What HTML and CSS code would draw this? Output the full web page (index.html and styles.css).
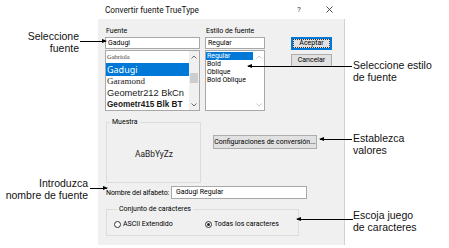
FILE: index.html
```html
<!DOCTYPE html>
<html lang="es">
<head>
<meta charset="utf-8">
<title>Convertir fuente TrueType</title>
<link rel="stylesheet" href="styles.css">
</head>
<body>
<div class="screen">
  <div class="notes notes-left">
    <p class="note note-font">Seleccione<br>fuente</p>
    <p class="note note-name">Introduzca<br>nombre de fuente</p>
  </div>

  <div class="dialog">
    <div class="titlebar">
      <span class="title">Convertir fuente TrueType</span>
      <span class="tb-help">?</span>
      <svg class="tb-close" width="7" height="7" viewBox="0 0 7 7"><path d="M0.5 0.5L6.5 6.5M6.5 0.5L0.5 6.5" stroke="#222" stroke-width="0.8" fill="none"/></svg>
    </div>
    <div class="body">
      <div class="top-row">
        <div class="col col-font">
          <div class="lbl">Fuente</div>
          <div class="textbox">Gadugi</div>
          <div class="listbox">
            <ul class="items font-items">
              <li class="fi fi-gabriola">Gabriola</li>
              <li class="fi fi-gadugi selected">Gadugi</li>
              <li class="fi fi-garamond">Garamond</li>
              <li class="fi fi-geo212">Geometr212 BkCn</li>
              <li class="fi fi-geo415">Geometr415 Blk BT</li>
            </ul>
            <div class="scrollbar">
              <div class="sb-arrow"><svg width="6" height="4" viewBox="0 0 6 4"><path d="M0.5 3.5L3 1L5.5 3.5" stroke="#606060" stroke-width="0.9" fill="none"/></svg></div>
              <div class="sb-thumb"></div>
              <div class="sb-fill"></div>
              <div class="sb-arrow"><svg width="6" height="4" viewBox="0 0 6 4"><path d="M0.5 0.5L3 3L5.5 0.5" stroke="#606060" stroke-width="0.9" fill="none"/></svg></div>
            </div>
          </div>
        </div>
        <div class="col col-style">
          <div class="lbl">Estilo de fuente</div>
          <div class="textbox">Regular</div>
          <div class="listbox">
            <ul class="items style-items">
              <li class="si selected">Regular</li>
              <li class="si">Bold</li>
              <li class="si">Oblique</li>
              <li class="si">Bold Oblique</li>
            </ul>
            <div class="scrollbar scrollbar-off">
              <div class="sb-arrow"><svg width="6" height="4" viewBox="0 0 6 4"><path d="M0.5 3.5L3 1L5.5 3.5" stroke="#c4c4c4" stroke-width="0.9" fill="none"/></svg></div>
              <div class="sb-fill"></div>
              <div class="sb-arrow"><svg width="6" height="4" viewBox="0 0 6 4"><path d="M0.5 0.5L3 3L5.5 0.5" stroke="#c4c4c4" stroke-width="0.9" fill="none"/></svg></div>
            </div>
          </div>
        </div>
        <div class="buttons">
          <button class="btn btn-default">Aceptar</button>
          <button class="btn">Cancelar</button>
        </div>
      </div>

      <div class="mid-row">
        <fieldset class="group group-sample">
          <legend>Muestra</legend>
          <div class="sample">AaBbYyZz</div>
        </fieldset>
        <button class="btn btn-config">Configuraciones de conversión...</button>
      </div>

      <div class="name-row">
        <span class="name-lbl">Nombre del alfabeto:</span>
        <div class="textbox name-box">Gadugi Regular</div>
      </div>

      <fieldset class="group group-charset">
        <legend>Conjunto de carácteres</legend>
        <div class="radios">
          <label class="radio"><span class="dot"></span>ASCII Extendido</label>
          <label class="radio checked"><span class="dot"></span>Todas los caracteres</label>
        </div>
      </fieldset>
    </div>
  </div>

  <div class="notes notes-right">
    <p class="note note-style">Seleccione estilo<br>de fuente</p>
    <p class="note note-values">Establezca<br>valores</p>
    <p class="note note-charset">Escoja juego<br>de caracteres</p>
  </div>

  <div class="callout c-font arrow-right"></div>
  <div class="callout c-style arrow-left"></div>
  <div class="callout c-values arrow-left"></div>
  <div class="callout c-name arrow-right"></div>
  <div class="callout c-charset arrow-left"></div>
</div>
</body>
</html>
```

FILE: styles.css
```css
* { box-sizing: border-box; }

body {
  margin: 0;
  background: #ffffff;
}

.screen {
  position: relative;
  display: flex;
  width: 449px;
  height: 248px;
  overflow: hidden;
  font-family: "Liberation Sans", Arial, sans-serif;
}

/* ---------- annotations ---------- */
.notes {
  font-size: 10.5px;
  line-height: 12px;
  color: #111;
  display: flex;
  flex-direction: column;
}
.note { margin: 0; white-space: nowrap; }

.notes-left {
  width: 98px;
  flex: none;
  align-items: flex-end;
  text-align: right;
}
.notes .note-font { margin-top: 30px; margin-right: 19px; }
.notes .note-name { margin-top: 123px; margin-right: 10px; }

.notes-right {
  flex: 1;
  padding-left: 8px;
}
.notes .note-style { margin-top: 59px; }
.notes .note-values { margin-top: 49px; }
.notes .note-charset { margin-top: 53px; }

.callout {
  position: absolute;
  height: 1px;
  background: #000;
}
.callout::after {
  content: "";
  position: absolute;
  top: -2px;
  border-top: 2.5px solid transparent;
  border-bottom: 2.5px solid transparent;
}
.arrow-right::after { right: -1px; border-left: 5px solid #000; }
.arrow-left::after { left: -1px; border-right: 5px solid #000; }

.c-font { left: 80px; top: 41px; width: 26px; }
.c-style { left: 248px; top: 66px; width: 104px; }
.c-values { left: 320px; top: 139px; width: 32px; }
.c-name { left: 90px; top: 188px; width: 17px; }
.c-charset { left: 297px; top: 219px; width: 56px; }

/* ---------- dialog ---------- */
.dialog {
  width: 247px;
  height: 245px;
  flex: none;
  display: flex;
  flex-direction: column;
  font-family: Roboto, "Noto Sans", sans-serif;
  font-size: 7px;
  color: #000;
}

.titlebar {
  height: 19px;
  flex: none;
  display: flex;
  align-items: center;
  padding: 0 12px 0 7px;
  background: #fff;
  font-size: 8.2px;
}
.title { flex: 1; color: #111; }
.tb-help { width: 6px; text-align: center; color: #333; margin-right: 24px; font-size: 7.5px; }
.tb-close { display: block; }

.body {
  flex: 1;
  background: #f0f0f0;
  border-right: 1px solid #d2d2d2;
  padding: 7px 0 0 7px;
}

.top-row {
  display: flex;
  align-items: flex-start;
}
.col { display: flex; flex-direction: column; }
.col-font { width: 95px; }
.col-style { width: 60px; margin-left: 5px; }

.lbl {
  height: 11px;
  line-height: 10px;
  padding-left: 1px;
}

.textbox {
  height: 12px;
  border: 1px solid #a8a8a8;
  background: #fff;
  line-height: 10px;
  padding-left: 2px;
  white-space: nowrap;
}

.listbox {
  margin-top: 1px;
  height: 61px;
  border: 1px solid #a8a8a8;
  background: #fff;
  display: flex;
}

.items {
  flex: 1;
  list-style: none;
  margin: 0;
  padding: 0;
  overflow: hidden;
  min-width: 0;
}

.fi {
  white-space: nowrap;
  padding-left: 1px;
  color: #1a1a1a;
}
.fi-gabriola {
  height: 12px;
  line-height: 12px;
  font-family: "Liberation Serif", serif;
  font-size: 6.5px;
  color: #333;
}
.fi-gadugi {
  height: 13px;
  line-height: 13px;
  font-family: "Noto Sans", sans-serif;
  font-size: 9px;
}
.fi-garamond {
  height: 11px;
  line-height: 11px;
  font-family: "Liberation Serif", serif;
  font-size: 9px;
}
.fi-geo212 {
  height: 12px;
  line-height: 12px;
  font-family: "Liberation Sans", sans-serif;
  font-size: 9.3px;
}
.fi-geo415 {
  height: 11px;
  line-height: 11px;
  font-family: "Liberation Sans", sans-serif;
  font-weight: bold;
  font-size: 8.2px;
}

.selected {
  background: #0078d7;
  color: #fff;
}

.style-items { padding-top: 1px; }
.si {
  height: 8px;
  line-height: 8px;
  padding-left: 1px;
  white-space: nowrap;
  font-size: 6.9px;
  margin-right: 1px;
}

.scrollbar {
  width: 10px;
  flex: none;
  display: flex;
  flex-direction: column;
  background: #f0f0f0;
}
.scrollbar-off { background: #fff; }
.sb-arrow {
  height: 11px;
  flex: none;
  display: flex;
  align-items: center;
  justify-content: center;
}
.sb-arrow svg { display: block; }
.sb-thumb {
  margin: 11px 1px 0;
  height: 10px;
  background: #cdcdcd;
}
.sb-fill { flex: 1; }

.buttons {
  width: 41px;
  margin-left: 26px;
  padding-top: 11px;
  display: flex;
  flex-direction: column;
  gap: 4px;
}

.btn {
  height: 13px;
  padding: 0;
  border: 1px solid #adadad;
  background: #e1e1e1;
  font-family: inherit;
  font-size: 7px;
  line-height: 11px;
  color: #000;
  white-space: nowrap;
}
.btn-default {
  border-color: #0078d7;
  box-shadow: inset 0 0 0 1px #0078d7;
  outline: 1px dotted #333;
  outline-offset: -3px;
}

.mid-row {
  display: flex;
  align-items: flex-start;
  margin-top: 6px;
}

.group {
  margin: 0;
  border: 1px solid #dcdcdc;
  min-width: 0;
}
.group legend {
  padding: 0 2px;
  margin-left: 3px;
  line-height: 10px;
  font-size: 7px;
}

.group-sample {
  width: 95px;
  margin-left: 1px;
  padding: 22px 0 23px;
}
.sample {
  text-align: center;
  line-height: 10px;
  font-size: 8.4px;
  color: #222;
  padding-left: 1px;
}

.btn-config {
  width: 104px;
  height: 14px;
  margin-top: 18px;
  margin-left: 12px;
  line-height: 12px;
}

.name-row {
  display: flex;
  align-items: center;
  margin-top: 3px;
}
.name-lbl {
  width: 66px;
  padding-left: 1px;
  white-space: nowrap;
  letter-spacing: -0.1px;
}
.name-box {
  width: 136px;
  height: 13px;
  line-height: 11px;
  padding-left: 4px;
}

.group-charset {
  width: 193px;
  margin-top: 5px;
  margin-left: 1px;
  padding: 5px 0 6px 7px;
}
.radios {
  display: grid;
  grid-template-columns: 91px auto;
  line-height: 10px;
}
.radio {
  display: flex;
  align-items: center;
  white-space: nowrap;
}
.dot {
  width: 7px;
  height: 7px;
  margin-right: 2px;
  border: 1px solid #333;
  border-radius: 50%;
  background: #fff;
  display: flex;
  align-items: center;
  justify-content: center;
}
.checked .dot::after {
  content: "";
  width: 3px;
  height: 3px;
  border-radius: 50%;
  background: #222;
}
```
